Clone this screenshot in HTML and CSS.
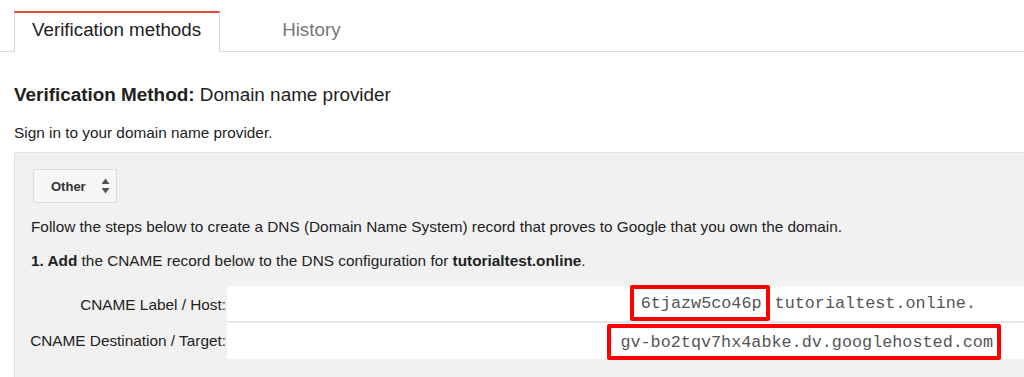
FILE: index.html
```html
<!DOCTYPE html>
<html>
<head>
<meta charset="utf-8">
<link rel="stylesheet" href="styles.css">
</head>
<body>
<div class="tabs">
  <div class="tab tab-active">Verification methods</div>
  <div class="tab tab-idle">History</div>
</div>
<div class="content">
  <h2 class="method"><b>Verification Method:</b> Domain name provider</h2>
  <p class="intro">Sign in to your domain name provider.</p>
  <div class="panel">
    <div class="select">
      <span class="select-text">Other</span>
      <svg class="select-arrows" width="9" height="16" viewBox="0 0 9 16"><path d="M4.5 0.5 L8.5 6 L0.5 6 Z" fill="#555"/><path d="M4.5 15.5 L8.5 10 L0.5 10 Z" fill="#555"/></svg>
    </div>
    <p class="step">Follow the steps below to create a DNS (Domain Name System) record that proves to Google that you own the domain.</p>
    <p class="step step-add"><b>1. Add</b> the CNAME record below to the DNS configuration for <b>tutorialtest.online</b>.</p>
    <div class="records">
      <div class="label">CNAME Label / Host:</div>
      <div class="value value-host">
        <span class="mark mark-host">6tjazw5co46p</span><span class="mono host-rest">tutorialtest.online.</span>
      </div>
      <div class="label">CNAME Destination / Target:</div>
      <div class="value value-target">
        <span class="mark mark-target">gv-bo2tqv7hx4abke.dv.googlehosted.com</span>
      </div>
    </div>
  </div>
</div>
</body>
</html>
```
FILE: styles.css
```css
html, body {
  margin: 0;
  padding: 0;
  background: #ffffff;
  overflow: hidden;
}
body {
  font-family: "Liberation Sans", Arial, sans-serif;
  font-size: 15.35px;
  color: #222222;
}
.tabs {
  display: flex;
  align-items: flex-start;
  padding: 11px 0 0 14px;
  height: 40px;
  border-bottom: 1px solid #dadada;
}
.tab {
  font-size: 18.8px;
  line-height: 34px;
  padding-bottom: 5px;
}
.tab-active {
  border-top: 2px solid #dd4b39;
  border-left: 1px solid #d4d4d4;
  border-right: 1px solid #d4d4d4;
  background: #ffffff;
  padding-left: 17px;
  padding-right: 18px;
  color: #222222;
}
.tab-idle {
  border-top: 2px solid transparent;
  padding-left: 62px;
  color: #777777;
}
.content {
  padding-left: 14px;
}
.method {
  margin: 31px 0 0;
  font-size: 18.9px;
  font-weight: normal;
  line-height: 24px;
  color: #222222;
}
.method b {
  font-weight: bold;
}
.intro {
  margin: 16px 0 0;
  line-height: 20px;
}
.panel {
  margin-top: 9px;
  background: #f1f1f1;
  border-top: 1px solid #e2e2e2;
  border-left: 1px solid #e2e2e2;
  padding: 16px 0 20px 16px;
}
.select {
  display: flex;
  align-items: center;
  box-sizing: border-box;
  width: 84px;
  height: 34px;
  margin-left: 2px;
  padding-left: 17px;
  background: #f6f6f6;
  border: 1px solid #dcdcdc;
  border-radius: 2px;
}
.select-text {
  font-size: 13px;
  font-weight: bold;
  color: #333333;
}
.select-arrows {
  margin-left: 15px;
}
.step {
  margin: 14px 0 0;
  line-height: 20px;
}
.records {
  margin-top: 15px;
  display: grid;
  grid-template-columns: 196px 1fr;
  grid-template-rows: 37px 36px;
}
.label {
  display: flex;
  align-items: center;
  justify-content: flex-end;
  padding-right: 1px;
  white-space: nowrap;
  color: #222222;
}
.value {
  display: flex;
  justify-content: flex-end;
  align-items: stretch;
  background: #ffffff;
  font-family: "Liberation Mono", "Courier New", monospace;
  font-size: 16.8px;
  color: #555555;
}
.value-host {
  border-bottom: 2px solid #e6e6e6;
  padding-right: 48px;
}
.value-target {
  padding-right: 23px;
}
.mark {
  display: flex;
  align-items: center;
  border: 4px solid #ff0000;
  border-radius: 2px;
}
.mark-host {
  margin-top: -1px;
  padding: 0 4px 0 7px;
}
.mark-target {
  margin-top: 1px;
  margin-bottom: -1px;
  padding: 0 4px 0 9px;
}
.mono {
  display: flex;
  align-items: center;
}
.host-rest {
  margin-left: 5px;
}
```
